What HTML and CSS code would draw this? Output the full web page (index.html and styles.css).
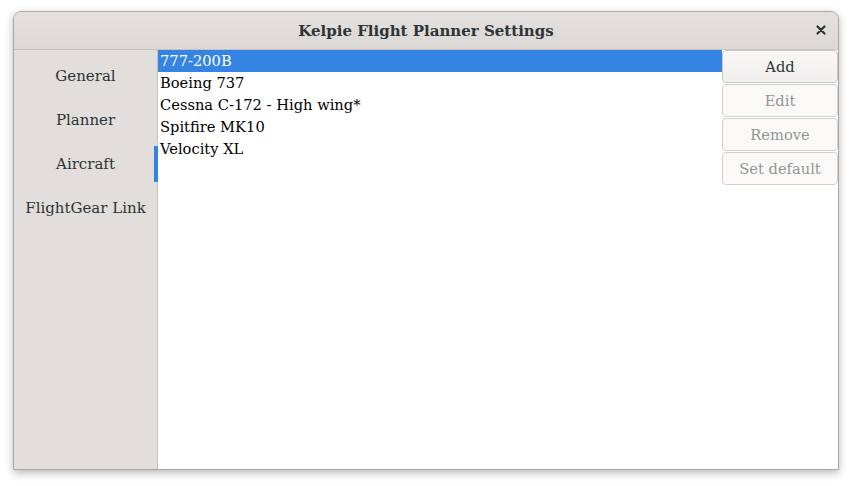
FILE: index.html
```html
<!DOCTYPE html>
<html>
<head>
<meta charset="utf-8">
<link rel="stylesheet" href="styles.css">
</head>
<body>
<div class="window">
  <div class="titlebar">
    <span class="title">Kelpie Flight Planner Settings</span>
    <svg class="close" width="10" height="10" viewBox="0 0 10 10"><path d="M1.5 1.5 L8.5 8.5 M8.5 1.5 L1.5 8.5" stroke="#2e3436" stroke-width="2.2" stroke-linecap="round"/></svg>
  </div>
  <div class="content">
    <nav class="sidebar">
      <div class="nav-item">General</div>
      <div class="nav-item">Planner</div>
      <div class="nav-item active">Aircraft</div>
      <div class="nav-item">FlightGear Link</div>
    </nav>
    <div class="list">
      <div class="row selected">777-200B</div>
      <div class="row">Boeing 737</div>
      <div class="row">Cessna C-172 - High wing*</div>
      <div class="row">Spitfire MK10</div>
      <div class="row">Velocity XL</div>
    </div>
    <div class="buttons">
      <button class="btn">Add</button>
      <button class="btn disabled">Edit</button>
      <button class="btn disabled">Remove</button>
      <button class="btn disabled">Set default</button>
    </div>
  </div>
</div>
</body>
</html>
```
FILE: styles.css
```css
* { box-sizing: border-box; }
html, body { margin: 0; padding: 0; background: #ffffff; }
body {
  font-family: "DejaVu Serif", serif;
  width: 853px;
  height: 486px;
  overflow: hidden;
}
.window {
  margin: 11px 0 0 13px;
  width: 826px;
  height: 459px;
  border: 1px solid #a9a6a3;
  border-radius: 8px 8px 0 0;
  box-shadow: 0 3px 8px rgba(0,0,0,0.28);
  display: flex;
  flex-direction: column;
  overflow: hidden;
  background: #fff;
}
.titlebar {
  height: 38px;
  flex: none;
  background: linear-gradient(#e3e0dd, #dcd8d5);
  border-bottom: 1px solid #c6c1bc;
  display: flex;
  align-items: center;
  justify-content: center;
  position: relative;
}
.title {
  font-weight: bold;
  font-size: 15px;
  color: #2e3436;
}
.close {
  position: absolute;
  right: 12px;
  top: 13px;
}
.content {
  flex: 1;
  display: flex;
}
.sidebar {
  width: 144px;
  flex: none;
  background: #e1dedb;
  border-right: 1px solid #c3bfbb;
  padding-top: 4px;
}
.nav-item {
  height: 44px;
  display: flex;
  align-items: center;
  justify-content: center;
  font-size: 15px;
  color: #2e3436;
  position: relative;
}
.nav-item.active::after {
  content: "";
  position: absolute;
  right: -1px;
  top: 4px;
  width: 4px;
  height: 36px;
  background: #3584e4;
}
.list {
  flex: 1;
}
.row {
  height: 22px;
  line-height: 22px;
  padding-left: 2px;
  font-size: 14.67px;
  color: #000;
}
.row.selected {
  background: #3584e4;
  color: #fff;
}
.buttons {
  width: 116px;
  flex: none;
  display: flex;
  flex-direction: column;
  gap: 1px;
}
.btn {
  height: 33px;
  font-family: "DejaVu Serif", serif;
  font-size: 14.67px;
  color: #2e3436;
  background: linear-gradient(#f8f7f6, #f1efed);
  border: 1px solid #cdc7c2;
  border-radius: 4px;
  padding: 0;
}
.btn.disabled {
  color: #929595;
  background: #faf9f8;
  border-color: #d5d0cc;
}
```
